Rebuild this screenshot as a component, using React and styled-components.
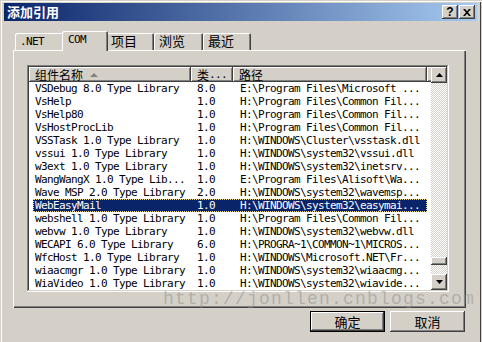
import React from 'react';
import styled, { createGlobalStyle, css } from 'styled-components';

const face = '#d4d0c8';
const shadow = '#808080';
const dark = '#404040';
const mono = `"Liberation Mono", "Noto Sans CJK SC", monospace`;
const rowMono = `"DejaVu Sans Mono", "Liberation Mono", "Noto Sans CJK SC", monospace`;
const cjk = `"Noto Sans CJK SC", "Liberation Sans", sans-serif`;

const rows = [
  ['VSDebug 8.0 Type Library', '8.0', 'E:\\Program Files\\Microsoft ...'],
  ['VsHelp', '1.0', 'H:\\Program Files\\Common Fil...'],
  ['VsHelp80', '1.0', 'H:\\Program Files\\Common Fil...'],
  ['VsHostProcLib', '1.0', 'H:\\Program Files\\Common Fil...'],
  ['VSSTask 1.0 Type Library', '1.0', 'H:\\WINDOWS\\Cluster\\vsstask.dll'],
  ['vssui 1.0 Type Library', '1.0', 'H:\\WINDOWS\\system32\\vssui.dll'],
  ['w3ext 1.0 Type Library', '1.0', 'H:\\WINDOWS\\system32\\inetsrv...'],
  ['WangWangX 1.0 Type Lib...', '1.0', 'E:\\Program Files\\Alisoft\\Wa...'],
  ['Wave MSP 2.0 Type Library', '2.0', 'H:\\WINDOWS\\system32\\wavemsp...'],
  ['WebEasyMail', '1.0', 'H:\\WINDOWS\\system32\\easymai...'],
  ['webshell 1.0 Type Library', '1.0', 'H:\\Program Files\\Common Fil...'],
  ['webvw 1.0 Type Library', '1.0', 'H:\\WINDOWS\\system32\\webvw.dll'],
  ['WECAPI 6.0 Type Library', '6.0', 'H:\\PROGRA~1\\COMMON~1\\MICROS...'],
  ['WfcHost 1.0 Type Library', '1.0', 'H:\\WINDOWS\\Microsoft.NET\\Fr...'],
  ['wiaacmgr 1.0 Type Library', '1.0', 'H:\\WINDOWS\\system32\\wiaacmg...'],
  ['WiaVideo 1.0 Type Library', '1.0', 'H:\\WINDOWS\\system32\\wiavide...'],
];

const tabs = ['.NET', 'COM', '项目', '浏览', '最近'];
const tabWidths = [49, 46, 48, 49, 48];

const GlobalStyle = createGlobalStyle`
  body {
    margin: 0;
    background: ${face};
    font-family: ${cjk};
  }
`;

// classic 3D edges
const raised = css`
  box-shadow: inset -1px -1px ${dark}, inset 1px 1px #fff,
    inset -2px -2px ${shadow}, inset 2px 2px ${face};
`;

const sunken = css`
  box-shadow: inset -1px -1px #fff, inset 1px 1px ${shadow},
    inset -2px -2px ${face}, inset 2px 2px ${dark};
`;

const Window = styled.div`
  position: relative;
  width: 482px;
  height: 342px;
  box-sizing: border-box;
  padding: 3px 5px 0 4px;
  background: ${face};
  box-shadow: inset 1px 1px ${face}, inset 2px 2px #fff,
    inset -1px 0 ${face}, inset -2px 0 ${dark};
  display: flex;
  flex-direction: column;
  overflow: hidden;
`;

const TitleBar = styled.div`
  height: 18px;
  display: flex;
  align-items: center;
  justify-content: space-between;
  padding: 0 2px;
  background: linear-gradient(to right, #0a246a, #a6caf0);
`;

const Title = styled.span`
  color: #fff;
  font: bold 13px ${cjk};
  line-height: 18px;
  padding-left: 1px;
`;

const CaptionButtons = styled.div`
  display: flex;
  gap: 1px;
`;

const CaptionButton = styled.div`
  width: 16px;
  height: 14px;
  background: ${face};
  ${raised};
  display: flex;
  align-items: center;
  justify-content: center;
  font: bold 12px "Liberation Sans", sans-serif;
  color: #000;
  line-height: 14px;
`;

const Body = styled.div`
  margin: 0 11px 0 9px;
  display: flex;
  flex-direction: column;
`;

const TabStrip = styled.div`
  position: relative;
  z-index: 1;
  display: flex;
  align-items: flex-end;
  height: 19px;
  margin-top: 10px;
  padding-left: 2px;
`;

const Tab = styled.div`
  box-sizing: border-box;
  width: ${p => p.$width}px;
  height: ${p => (p.$active ? 20 : 17)}px;
  margin: ${p => (p.$active ? '0 -2px -1px' : '0')};
  padding: ${p => (p.$active ? '2px 0 0 6px' : '2px 0 0 5px')};
  position: relative;
  z-index: ${p => (p.$active ? 2 : 0)};
  background: ${face};
  border-radius: 2px 2px 0 0;
  box-shadow: inset 1px 1px #fff, inset -1px 0 ${dark}, inset -2px 0 ${shadow};
  font-family: ${rowMono};
  font-size: ${p => (p.$cjk ? 13 : 11)}px;
  letter-spacing: ${p => (p.$cjk ? 0 : -0.62)}px;
  line-height: 14px;
  color: #000;
`;

const Panel = styled.div`
  box-sizing: border-box;
  height: 258px;
  padding: 15px 17px 16px 14px;
  background: ${face};
  box-shadow: inset 1px 1px #fff, inset -1px -1px ${dark}, inset -2px -2px ${shadow};
`;

const ListView = styled.div`
  box-sizing: border-box;
  height: 227px;
  padding: 2px;
  background: #fff;
  ${sunken};
  display: flex;
`;

const ListMain = styled.div`
  width: 402px;
  display: flex;
  flex-direction: column;
  overflow: hidden;
`;

const Header = styled.div`
  display: grid;
  grid-template-columns: 162px 42px 194px 4px;
  height: 15px;
`;

const HeaderCell = styled.div`
  box-sizing: border-box;
  background: ${face};
  box-shadow: inset -1px -1px ${dark}, inset 1px 1px #fff, inset -2px -2px ${shadow};
  padding-left: 6px;
  display: flex;
  align-items: center;
  font: 12px ${cjk};
  line-height: 14px;
  color: #000;
  white-space: nowrap;
  overflow: hidden;
`;

const Dots = styled.span`
  font: 11px ${rowMono};
  letter-spacing: -0.62px;
`;

const SortArrow = styled.span`
  width: 0;
  height: 0;
  margin-left: 7px;
  border-left: 4px solid transparent;
  border-right: 4px solid transparent;
  border-bottom: 4px solid ${shadow};
`;

const Row = styled.div`
  height: 13px;
  padding-left: 4px;
`;

const RowBody = styled.div`
  box-sizing: border-box;
  width: 394px;
  height: 13px;
  display: grid;
  grid-template-columns: 158px 42px 194px;
  background: ${p => (p.$selected ? '#0a246a' : 'transparent')};
  color: ${p => (p.$selected ? '#fff' : '#000')};
  outline: ${p => (p.$selected ? '1px dotted #e8d890' : 'none')};
  outline-offset: -1px;
  font: 11px ${rowMono};
  letter-spacing: -0.62px;
  line-height: 13px;
`;

const Cell = styled.div`
  padding-left: ${p => p.$pad}px;
  white-space: nowrap;
  overflow: hidden;
`;

const ScrollBar = styled.div`
  width: 16px;
  display: flex;
  flex-direction: column;
`;

const ScrollButton = styled.div`
  width: 16px;
  height: 16px;
  background: ${face};
  ${raised};
  display: flex;
  align-items: center;
  justify-content: center;
`;

const Track = styled.div`
  flex: 1;
  background: repeating-conic-gradient(${face} 0 25%, #fff 0 50%) 0 0 / 2px 2px;
`;

const Thumb = styled.div`
  width: 16px;
  height: 8px;
  background: ${face};
  ${raised};
`;

const ButtonRow = styled.div`
  display: flex;
  justify-content: flex-end;
  gap: 5px;
  margin-top: 3px;
  padding-right: 1px;
`;

const DialogButton = styled.button`
  box-sizing: border-box;
  width: 75px;
  height: 21px;
  padding: 0;
  border: none;
  background: ${face};
  font: 13px ${cjk};
  line-height: 15px;
  color: #000;
  box-shadow: ${p =>
    p.$default
      ? `inset 0 0 0 1px #000, inset -2px -2px ${dark}, inset 2px 2px #fff, inset -3px -3px ${shadow}`
      : `inset -1px -1px ${dark}, inset 1px 1px #fff, inset -2px -2px ${shadow}`};
`;

const Watermark = styled.div`
  position: absolute;
  left: 163px;
  top: 293px;
  font: 18px ${mono};
  letter-spacing: 1.2px;
  line-height: 12px;
  color: rgba(140, 140, 140, 0.5);
  pointer-events: none;
  white-space: nowrap;
`;

const Arrow = ({ down }) => (
  <svg width="7" height="4" viewBox="0 0 7 4">
    <path d={down ? 'M0 0h7L3.5 4z' : 'M3.5 0L7 4H0z'} fill="#000" />
  </svg>
);

const CloseGlyph = () => (
  <svg width="8" height="7" viewBox="0 0 8 7">
    <path d="M0 0h2l2 2.2L6 0h2L5 3.5 8 7H6L4 4.8 2 7H0l3-3.5z" fill="#000" />
  </svg>
);

export default function App() {
  const selected = 9;
  const thumbTop = 174;

  return (
    <>
      <GlobalStyle />
      <Window>
        <TitleBar>
          <Title>添加引用</Title>
          <CaptionButtons>
            <CaptionButton>?</CaptionButton>
            <CaptionButton><CloseGlyph /></CaptionButton>
          </CaptionButtons>
        </TitleBar>

        <Body>
          <TabStrip>
            {tabs.map((t, i) => (
              <Tab key={t} $width={tabWidths[i]} $active={i === 1} $cjk={i > 1}>{t}</Tab>
            ))}
          </TabStrip>

          <Panel>
            <ListView>
              <ListMain>
                <Header>
                  <HeaderCell>组件名称<SortArrow /></HeaderCell>
                  <HeaderCell>类<Dots>...</Dots></HeaderCell>
                  <HeaderCell>路径</HeaderCell>
                  <HeaderCell />
                </Header>
                {rows.map((r, i) => (
                  <Row key={r[0]}>
                    <RowBody $selected={i === selected}>
                      <Cell $pad={2}>{r[0]}</Cell>
                      <Cell $pad={6}>{r[1]}</Cell>
                      <Cell $pad={7}>{r[2]}</Cell>
                    </RowBody>
                  </Row>
                ))}
              </ListMain>
              <ScrollBar>
                <ScrollButton><Arrow /></ScrollButton>
                <Track>
                  <Thumb style={{ marginTop: thumbTop }} />
                </Track>
                <ScrollButton><Arrow down /></ScrollButton>
              </ScrollBar>
            </ListView>
          </Panel>

          <ButtonRow>
            <DialogButton $default>确定</DialogButton>
            <DialogButton>取消</DialogButton>
          </ButtonRow>
        </Body>

        <Watermark>http://jonllen.cnblogs.com</Watermark>
      </Window>
    </>
  );
}
